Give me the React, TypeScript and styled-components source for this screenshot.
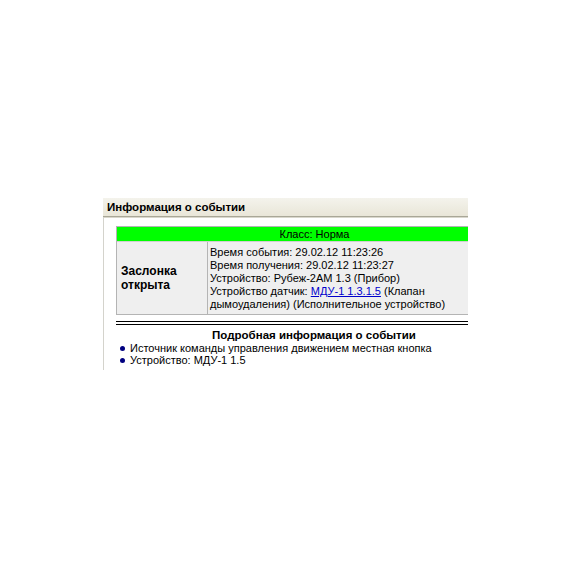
import styled, { createGlobalStyle } from 'styled-components';

const GlobalStyle = createGlobalStyle`
  body {
    margin: 0;
    background: #ffffff;
    font-family: 'Liberation Sans', Arial, sans-serif;
  }
`;

const Page = styled.div`
  width: 570px;
  height: 570px;
  padding: 198px 0 0 103px;
  box-sizing: border-box;
`;

const Window = styled.div`
  width: 365px;
  overflow: hidden;
`;

const TitleBar = styled.div`
  height: 18px;
  padding-left: 4px;
  display: flex;
  align-items: center;
  background: linear-gradient(#f4f3ec, #e9e6d8);
  border-bottom: 1px solid #a9a797;
  box-shadow: 0 1px 0 #d9d7cc;
  font-weight: bold;
  font-size: 11.5px;
  color: #000;
`;

const Body = styled.div`
  height: 144px;
  border-left: 1px solid #d4d3cc;
  padding: 9px 0 0 12px;
`;

const Inner = styled.div`
  width: 396px;
`;

const EventTable = styled.div`
  border: 1px solid #b4b4b4;
  border-right: none;
  background: #efefef;
`;

const ClassRow = styled.div`
  height: 14px;
  line-height: 14px;
  background: #00ff00;
  text-align: center;
  font-size: 11px;
  color: #000;
  border-bottom: 1px solid #d0d0d0;
`;

const Row = styled.div`
  display: grid;
  grid-template-columns: 91px 1fr;
`;

const NameCell = styled.div`
  display: flex;
  align-items: center;
  padding-left: 4px;
  font-weight: bold;
  font-size: 12px;
  line-height: 14px;
  border-right: 1px solid #b4b4b4;
`;

const InfoCell = styled.div`
  padding: 4px 0 3px 2px;
  font-size: 11px;
  line-height: 13px;
  color: #000;
`;

const Link = styled.a`
  color: #0000cc;
  text-decoration: underline;
`;

const DoubleRule = styled.div`
  margin-top: 6px;
  height: 2px;
  border-top: 1px solid #000;
  border-bottom: 1px solid #000;
`;

const Heading = styled.div`
  margin-top: 3px;
  text-align: center;
  font-weight: bold;
  font-size: 11.5px;
  line-height: 14px;
`;

const List = styled.ul`
  margin: 0;
  padding: 0 0 0 4px;
  list-style: none;
`;

const Item = styled.li`
  display: flex;
  align-items: center;
  font-size: 11px;
  line-height: 12px;

  &::before {
    content: '';
    width: 5px;
    height: 5px;
    border-radius: 50%;
    background: #000080;
    margin-right: 5px;
  }
`;

export default function App() {
  return (
    <>
      <GlobalStyle />
      <Page>
        <Window>
          <TitleBar>Информация о событии</TitleBar>
          <Body>
            <Inner>
              <EventTable>
                <ClassRow>Класс: Норма</ClassRow>
                <Row>
                  <NameCell>
                    Заслонка
                    <br />
                    открыта
                  </NameCell>
                  <InfoCell>
                    Время события: 29.02.12 11:23:26
                    <br />
                    Время получения: 29.02.12 11:23:27
                    <br />
                    Устройство: Рубеж-2АМ 1.3 (Прибор)
                    <br />
                    Устройство датчик: <Link>МДУ-1 1.3.1.5</Link> (Клапан
                    <br />
                    дымоудаления) (Исполнительное устройство)
                  </InfoCell>
                </Row>
              </EventTable>
              <DoubleRule />
              <Heading>Подробная информация о событии</Heading>
              <List>
                <Item>Источник команды управления движением местная кнопка</Item>
                <Item>Устройство: МДУ-1 1.5</Item>
              </List>
            </Inner>
          </Body>
        </Window>
      </Page>
    </>
  );
}
